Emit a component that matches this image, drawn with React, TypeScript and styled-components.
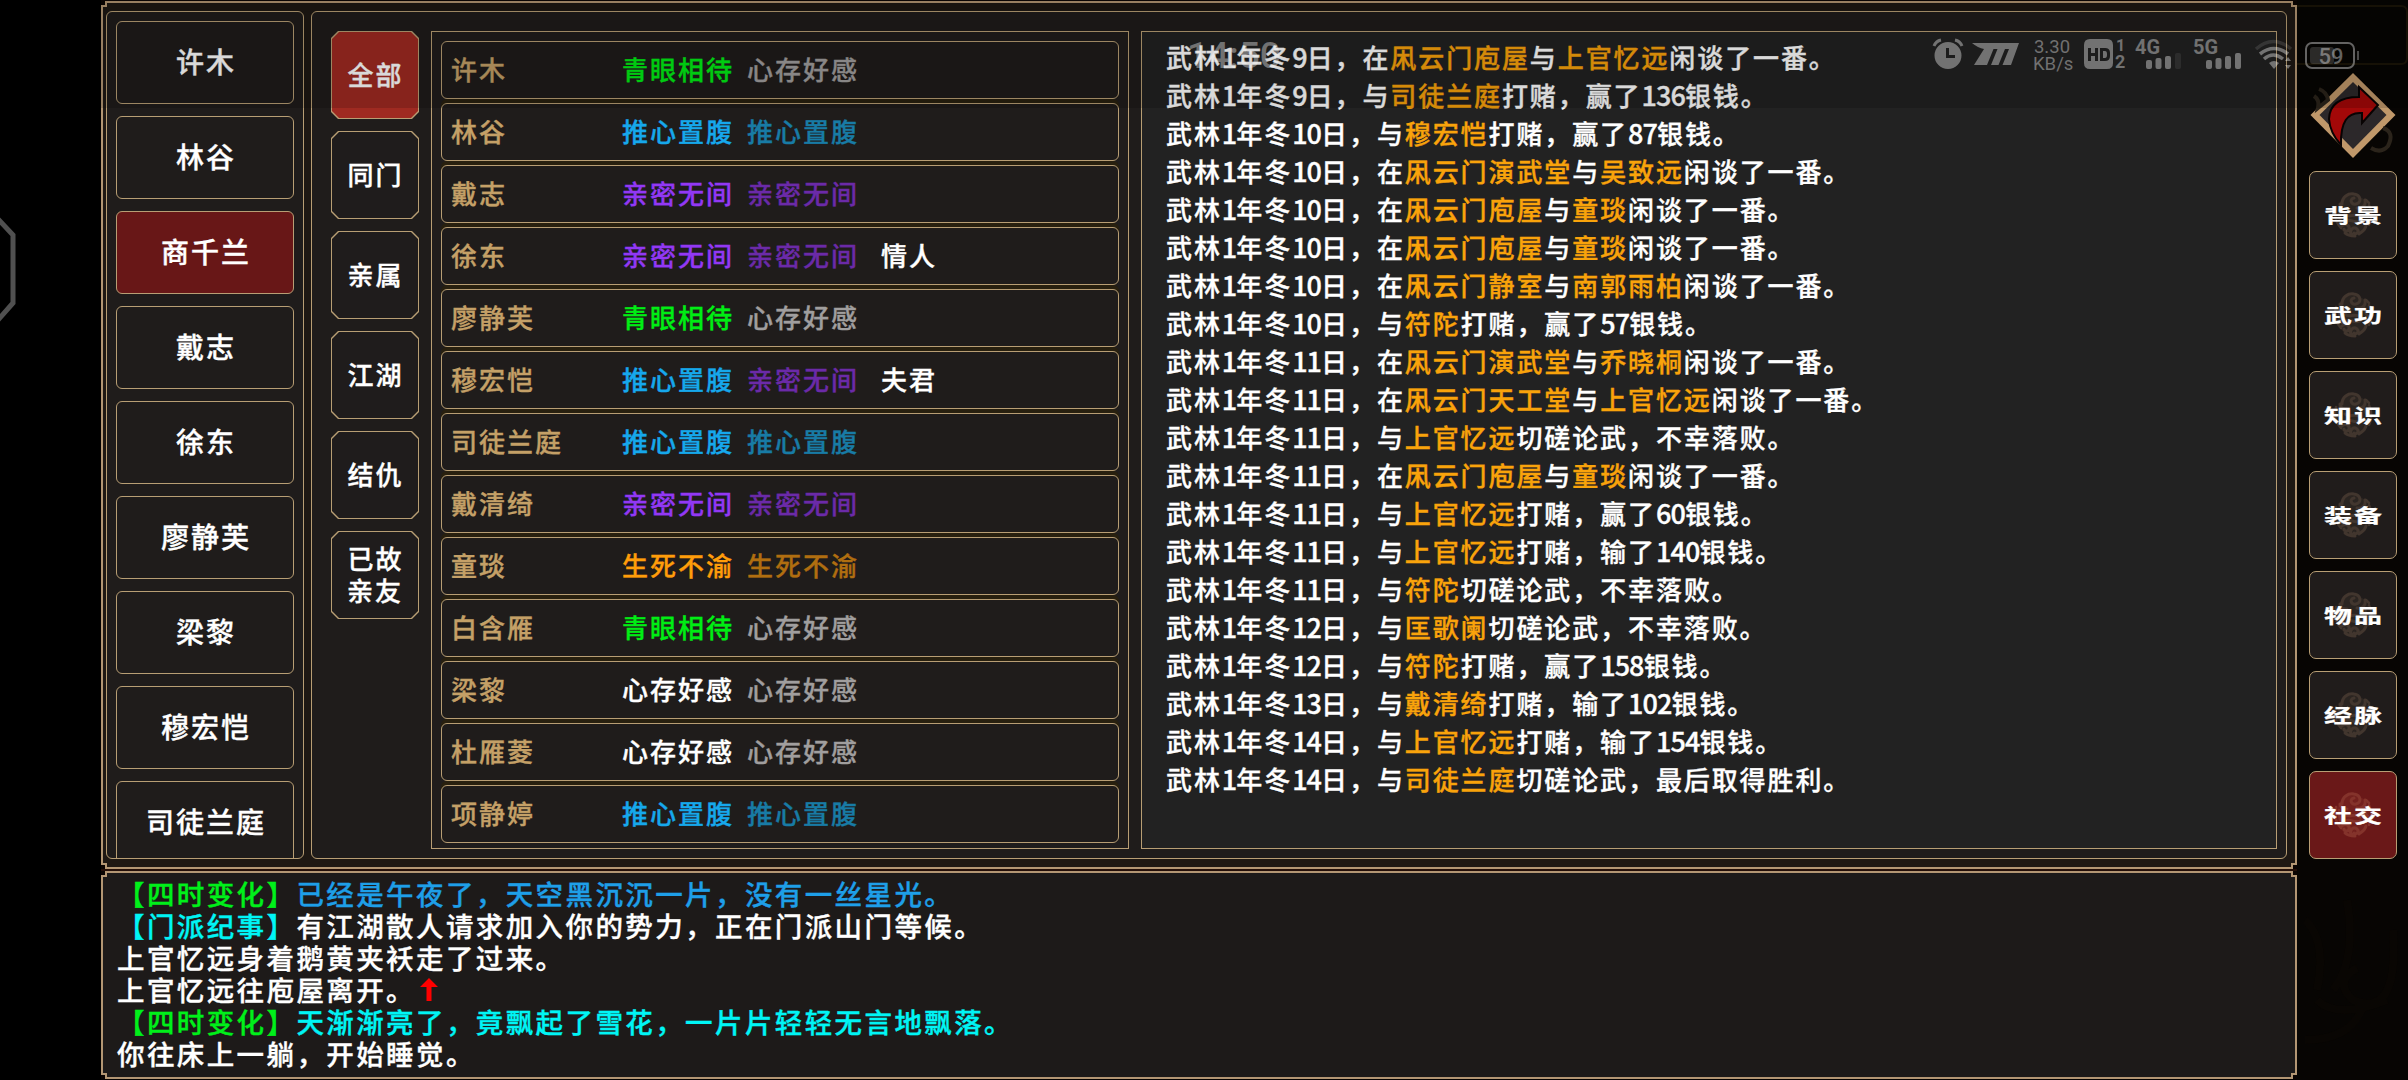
import { Fragment } from "react";
import styled, { createGlobalStyle } from "styled-components";

const GlobalStyle = createGlobalStyle`
  * {
    box-sizing: border-box;
  }

  body {
    margin: 0;
    background: #000;
    overflow: hidden;
  }

  button {
    font-family: inherit;
    padding: 0;
    cursor: pointer;
  }
`;

const GOLD = "#b89e74";

const Screen = styled.div`
  position: relative;
  display: flex;
  width: 2408px;
  height: 1080px;
  padding-left: 101px;
  overflow: hidden;
  background: linear-gradient(90deg, #000 101px, #070503 101px);
  color: #fff;
  font-family: "Noto Sans CJK SC", sans-serif;
  font-weight: 500;
  -webkit-text-stroke: 0.35px currentColor;
`;

const Main = styled.main`
  display: flex;
  flex-direction: column;
  gap: 2px;
  width: 2196px;
  height: 1080px;
  padding: 1px 0;
  background: linear-gradient(#0d0605 865px, #240f08 868px, #240f08 873px, #060302 876px);
`;

const Frame = styled.section<{ $height: number; $color: string }>`
  position: relative;
  display: flex;
  gap: 7px;
  height: ${(p) => p.$height}px;
  flex: none;
  border: 2px solid #b39673;
  background: ${(p) => p.$color};
`;

const Corner = styled.i<{ $v: "top" | "bottom"; $h: "left" | "right" }>`
  position: absolute;
  ${(p) => p.$v}: -2px;
  ${(p) => p.$h}: -2px;
  width: 6px;
  height: 6px;
  background: #0b0503;
  border: 0 solid #b39673;
  border-${(p) => (p.$v === "top" ? "bottom" : "top")}-width: 2px;
  border-${(p) => (p.$h === "left" ? "right" : "left")}-width: 2px;
`;

const Panel = styled.div`
  display: flex;
  height: 848px;
  margin-top: 8px;
  border: 1px solid ${GOLD};
  border-radius: 6px;
  background: #1f1c1b;
  overflow: hidden;
`;

const CharacterPanel = styled(Panel)`
  flex-direction: column;
  gap: 12px;
  width: 198px;
  margin-left: 3px;
  padding: 9px;
`;

const CharacterButton = styled.button<{ $active?: boolean }>`
  flex: none;
  width: 178px;
  height: 83px;
  padding-bottom: 4px;
  border: 1px solid ${GOLD};
  border-radius: 6px;
  background: ${(p) => (p.$active ? "#681717" : "#1f1c1b")};
  color: #fff;
  font-size: 28px;
  font-weight: 500;
  letter-spacing: 2px;
  text-indent: 2px;
`;

const SocialPanel = styled(Panel)`
  width: 1976px;
  padding: 19px 9px 9px 19px;
`;

const Tabs = styled.div`
  display: flex;
  flex-direction: column;
  gap: 12px;
  width: 100px;
`;

const TAB_SHAPE = `polygon(
  7px 0, calc(100% - 7px) 0, calc(100% - 5px) 2px, calc(100% - 2px) 5px, 100% 7px,
  100% calc(100% - 7px), calc(100% - 2px) calc(100% - 5px), calc(100% - 5px) calc(100% - 2px), calc(100% - 7px) 100%,
  7px 100%, 5px calc(100% - 2px), 2px calc(100% - 5px), 0 calc(100% - 7px),
  0 7px, 2px 5px, 5px 2px
)`;

const TabButton = styled.button<{ $active?: boolean }>`
  width: 88px;
  height: 88px;
  padding: 1px;
  border: 0;
  background: ${GOLD};
  clip-path: ${TAB_SHAPE};

  span {
    display: flex;
    align-items: center;
    justify-content: center;
    width: 86px;
    height: 86px;
    padding: 0 14px 3px;
    background: ${(p) => (p.$active ? "#9f2a21" : "#1f1c1c")};
    clip-path: ${TAB_SHAPE};
    color: #fff;
    font-size: 26px;
    font-weight: 500;
    line-height: 32px;
    letter-spacing: 2px;
    text-indent: 1px;
  }
`;

const RelationList = styled.div`
  display: flex;
  flex-direction: column;
  width: 698px;
  height: 818px;
  padding: 9px 9px 0;
  border: 1px solid ${GOLD};
  background: #201d1c;
`;

const RelationRow = styled.div`
  display: grid;
  grid-template-columns: 171px 125px 134px 1fr;
  align-items: center;
  flex: none;
  height: 58px;
  padding: 0 0 4px 9px;
  border: 1px solid ${GOLD};
  border-radius: 6px;
  background: #1f1c1b;
  font-size: 26px;
  letter-spacing: 2px;
  white-space: nowrap;

  & + & {
    margin-top: 4px;
    box-shadow: 0 -4px 0 #28200f;
  }
`;

const Label = styled.span<{ $color: string }>`
  color: ${(p) => p.$color};
`;

const LogPanel = styled.div`
  width: 1136px;
  height: 818px;
  margin-left: 12px;
  padding: 6px 24px;
  border: 1px solid ${GOLD};
  background: #222;
  font-size: 26px;
  line-height: 38px;
  letter-spacing: 1.9px;
  white-space: nowrap;
`;

const LogLine = styled.p`
  height: 38px;
  margin: 0;
`;

const Digits = styled.span`
  font-family: "Liberation Sans Narrow", "Noto Sans CJK SC", sans-serif;
  font-size: 27px;
  letter-spacing: -0.9px;
`;

const Mark = styled.span`
  color: #f9a30b;
`;

const Messages = styled.div`
  padding: 4px 14px;
  font-size: 27.5px;
  line-height: 32px;
  letter-spacing: 2.4px;
  white-space: nowrap;

  p {
    height: 32px;
    margin: 0;
  }
`;

const Arrow = styled.svg`
  margin: 0 0 -1px 4px;
`;

const SideMenu = styled.nav`
  position: relative;
  display: flex;
  flex-direction: column;
  gap: 12px;
  width: 111px;
  padding: 73px 0 0 12px;
`;

const ReturnButton = styled.button`
  height: 86px;
  width: 88px;
  border: 0;
  background: none;
`;

const MenuButton = styled.button<{ $active?: boolean }>`
  display: grid;
  place-items: center;
  width: 88px;
  height: 88px;
  flex: none;
  border: 1px solid ${GOLD};
  border-radius: 7px;
  background: ${(p) => (p.$active ? "#6a1818" : "#201c1b")};
  color: ${(p) => (p.$active ? "#84332b" : "#42362e")};

  svg,
  span {
    grid-area: 1 / 1;
  }

  span {
    color: #fff;
    font-family: LiSu, "Noto Sans CJK SC", sans-serif;
    font-size: 28px;
    font-weight: 700;
    line-height: 30px;
    letter-spacing: 2px;
    text-indent: 2px;
    transform: scaleY(0.68);
  }
`;

const Backdrop = styled.svg`
  position: absolute;
  inset: 0;
`;

const StatusShade = styled.div`
  position: absolute;
  top: 0;
  left: 101px;
  display: flex;
  align-items: flex-start;
  width: 2307px;
  height: 108px;
  padding-top: 39px;
  background: rgba(0, 0, 0, 0.15);
  color: rgba(255, 255, 255, 0.38);
  font-family: Roboto, sans-serif;
  pointer-events: none;
  -webkit-text-stroke: 0;

  svg {
    flex: none;
    overflow: visible;
  }
`;

const Clock = styled.span`
  width: 94px;
  margin: 0 651px 0 1086px;
  font-size: 37px;
  font-weight: 500;
  line-height: 34px;
`;

const Speed = styled.span`
  width: 38px;
  margin: 0 13px 0 11px;
  font-size: 18.5px;
  font-weight: 400;
  line-height: 17px;
  text-align: center;
`;

const EdgeHandle = styled.svg`
  position: absolute;
  top: 216px;
  left: 0;
`;

const characters = ["许木", "林谷", "商千兰", "戴志", "徐东", "廖静芙", "梁黎", "穆宏恺", "司徒兰庭"];
const tabs = ["全部", "同门", "亲属", "江湖", "结仇", "已故亲友"];
const menu = ["背景", "武功", "知识", "装备", "物品", "经脉", "社交"];

const levels: Record<string, [string, string]> = {
  青眼相待: ["#00ee14", "#0a8a14"],
  心存好感: ["#ffffff", "#a09e9e"],
  推心置腹: ["#16a8ec", "#187ba5"],
  亲密无间: ["#9238f5", "#6b2aa8"],
  生死不渝: ["#ff9d0a", "#b06e10"],
};

const relations = [
  ["许木", "青眼相待", "心存好感"],
  ["林谷", "推心置腹", "推心置腹"],
  ["戴志", "亲密无间", "亲密无间"],
  ["徐东", "亲密无间", "亲密无间", "情人"],
  ["廖静芙", "青眼相待", "心存好感"],
  ["穆宏恺", "推心置腹", "亲密无间", "夫君"],
  ["司徒兰庭", "推心置腹", "推心置腹"],
  ["戴清绮", "亲密无间", "亲密无间"],
  ["童琰", "生死不渝", "生死不渝"],
  ["白含雁", "青眼相待", "心存好感"],
  ["梁黎", "心存好感", "心存好感"],
  ["杜雁菱", "心存好感", "心存好感"],
  ["项静婷", "推心置腹", "推心置腹"],
];

// names and places between * are highlighted
const log = [
  "武林1年冬9日，在*凩云门庖屋*与*上官忆远*闲谈了一番。",
  "武林1年冬9日，与*司徒兰庭*打赌，赢了136银钱。",
  "武林1年冬10日，与*穆宏恺*打赌，赢了87银钱。",
  "武林1年冬10日，在*凩云门演武堂*与*吴致远*闲谈了一番。",
  "武林1年冬10日，在*凩云门庖屋*与*童琰*闲谈了一番。",
  "武林1年冬10日，在*凩云门庖屋*与*童琰*闲谈了一番。",
  "武林1年冬10日，在*凩云门静室*与*南郭雨柏*闲谈了一番。",
  "武林1年冬10日，与*符陀*打赌，赢了57银钱。",
  "武林1年冬11日，在*凩云门演武堂*与*乔晓桐*闲谈了一番。",
  "武林1年冬11日，在*凩云门天工堂*与*上官忆远*闲谈了一番。",
  "武林1年冬11日，与*上官忆远*切磋论武，不幸落败。",
  "武林1年冬11日，在*凩云门庖屋*与*童琰*闲谈了一番。",
  "武林1年冬11日，与*上官忆远*打赌，赢了60银钱。",
  "武林1年冬11日，与*上官忆远*打赌，输了140银钱。",
  "武林1年冬11日，与*符陀*切磋论武，不幸落败。",
  "武林1年冬12日，与*匡歌阑*切磋论武，不幸落败。",
  "武林1年冬12日，与*符陀*打赌，赢了158银钱。",
  "武林1年冬13日，与*戴清绮*打赌，输了102银钱。",
  "武林1年冬14日，与*上官忆远*打赌，输了154银钱。",
  "武林1年冬14日，与*司徒兰庭*切磋论武，最后取得胜利。",
];

function LogText({ text }: { text: string }) {
  return (
    <LogLine>
      {text.split("*").map((part, i) =>
        i % 2 ? (
          <Mark key={i}>{part}</Mark>
        ) : (
          <Fragment key={i}>
            {part.split(/(\d+)/).map((s, j) => (j % 2 ? <Digits key={j}>{s}</Digits> : s))}
          </Fragment>
        )
      )}
    </LogLine>
  );
}

function Corners() {
  return (
    <>
      <Corner $v="top" $h="left" />
      <Corner $v="top" $h="right" />
      <Corner $v="bottom" $h="left" />
      <Corner $v="bottom" $h="right" />
    </>
  );
}

function CloudSeal() {
  return (
    <svg width="40" height="46" viewBox="0 0 40 46" fill="none" stroke="currentColor" strokeLinecap="round">
      <ellipse cx="20" cy="23" rx="17" ry="20" fill="currentColor" stroke="none" opacity="0.35" />
      <path strokeWidth="3" d="M9 12c0-7 6-11 12-10 7 1 8 9 2 10-5 1-7-5-2-6M14 17c-4 0-7-2-7-5M24 16c6 1 9-3 8-8" />
      <path strokeWidth="2.5" d="M3 15c-2 8 0 16 5 21M6 18c1 6-1 9 3 13M36 13c3 6 3 14 0 20M31 15c3 4 0 7 4 9M33 8l3 3" />
      <path strokeWidth="3" d="M9 34c3-3 8-1 7 3-1 3-5 2-5 0M19 43c-4-4 1-9 5-6 3 3-1 6-3 4M26 42c2-2 6-3 7-8M12 41c3 3 7 3 10 3" />
      <path strokeWidth="3" d="M12 22c4 5 10-2 15 3M13 29c4-3 8 3 14 0" />
    </svg>
  );
}

function Bars({ dim }: { dim?: boolean }) {
  return (
    <g fill="currentColor">
      <rect x="12" y="21" width="6" height="9" rx="2" />
      <rect x="21.5" y="19" width="6" height="11" rx="2" />
      <rect x="31" y="17" width="6" height="13" rx="2" />
      <rect x="41" y="14" width="6" height="16" rx="2" opacity={dim ? 0.2 : 1} />
    </g>
  );
}

function StatusBar() {
  return (
    <StatusShade>
      <Clock>14:50</Clock>
      <svg width="32" height="32" viewBox="0 0 32 32">
        <path
          fill="currentColor"
          fillRule="evenodd"
          d="M16 3a13.5 13.5 0 1 0 0 27a13.5 13.5 0 1 0 0-27zM14 9h3v7h6v3h-9z"
        />
        <path d="M2 7q2-5 7-6M30 7q-2-5-7-6" fill="none" stroke="currentColor" strokeWidth="3" />
      </svg>
      <svg width="58" height="32" viewBox="0 0 58 32">
        <path
          fill="currentColor"
          d="M8 4H55L47 26H38.500L45 10H41L34.500 26H27L33.500 10H29.500L23 26H10L20 10Q14 9 8 4z"
        />
      </svg>
      <Speed>
        3.30
        <br />
        KB/s
      </Speed>
      <svg width="50" height="32" viewBox="0 0 50 32" fill="currentColor">
        <path
          fillRule="evenodd"
          d="M6 0h17q6 0 6 6v18q0 6-6 6H6q-6 0-6-6V6q0-6 6-6zM4 9v13h3v-5h4v5h3V9h-3v5H7V9zM16 9v13h5q5 0 5-5v-3q0-5-5-5zM19 12h2q2 0 2 3v1q0 3-2 3h-2z"
        />
        <text x="32" y="12" fontSize="16" fontWeight="700">1</text>
        <text x="31" y="29" fontSize="18" fontWeight="700">2</text>
      </svg>
      <svg width="60" height="32" viewBox="0 0 60 32">
        <text x="1" y="15" fontSize="20" fontWeight="700" fill="currentColor">4G</text>
        <Bars dim />
      </svg>
      <svg width="60" height="32" viewBox="0 0 60 32">
        <text x="-1" y="15" fontSize="20" fontWeight="700" fill="currentColor">5G</text>
        <Bars />
      </svg>
      <svg width="50" height="32" viewBox="0 0 50 32" fill="none" stroke="currentColor" strokeWidth="3.5">
        <path d="M2 10q17-15 35 0" opacity=".3" />
        <path d="M6 15q14-11 28 0M10 20q9-8 19 0" />
        <path d="M15 24q5-4 10 0l-5 6z" fill="currentColor" stroke="none" />
        <path d="M31 22l3-4 3 4zM31 26l3 4 3-4z" fill="currentColor" stroke="none" />
      </svg>
      <svg width="58" height="32" viewBox="0 0 58 32">
        <rect x="2" y="4" width="48" height="25" rx="6" fill="none" stroke="currentColor" strokeWidth="2" />
        <rect x="6" y="8" width="24" height="17" rx="3" fill="currentColor" opacity=".4" />
        <path d="M54 12v9" stroke="currentColor" strokeWidth="1.5" />
        <text x="14.5" y="25" fontSize="22" fontWeight="500" fill="currentColor">59</text>
      </svg>
    </StatusShade>
  );
}

export default function App() {
  return (
    <Screen>
      <GlobalStyle />
      <Main>
        <Frame $height={868} $color="#1e1813">
          <Corners />
          <CharacterPanel>
            {characters.map((name) => (
              <CharacterButton key={name} $active={name === "商千兰"}>
                {name}
              </CharacterButton>
            ))}
          </CharacterPanel>
          <SocialPanel>
            <Tabs>
              {tabs.map((tab) => (
                <TabButton key={tab} $active={tab === "全部"}>
                  <span>{tab}</span>
                </TabButton>
              ))}
            </Tabs>
            <RelationList>
              {relations.map(([name, theirs, mine, bond]) => (
                <RelationRow key={name}>
                  <Label $color="#c4a067">{name}</Label>
                  <Label $color={levels[theirs][0]}>{theirs}</Label>
                  <Label $color={levels[mine][1]}>{mine}</Label>
                  <Label $color="#fff">{bond}</Label>
                </RelationRow>
              ))}
            </RelationList>
            <LogPanel>
              {log.map((text, i) => (
                <LogText key={i} text={text} />
              ))}
            </LogPanel>
          </SocialPanel>
        </Frame>
        <Frame $height={208} $color="#1d1a19">
          <Corners />
          <Messages>
            <p>
              <Label $color="#00f01a">【四时变化】</Label>
              <Label $color="#1e9fe8">已经是午夜了，天空黑沉沉一片，没有一丝星光。</Label>
            </p>
            <p>
              <Label $color="#00f5f5">【门派纪事】</Label>
              有江湖散人请求加入你的势力，正在门派山门等候。
            </p>
            <p>上官忆远身着鹅黄夹袄走了过来。</p>
            <p>
              上官忆远往庖屋离开。
              <Arrow width="18" height="24" viewBox="0 0 18 24">
                <path d="M9 0l9 9h-6.500v14h-5V9H0z" fill="#f00" />
              </Arrow>
            </p>
            <p>
              <Label $color="#00f01a">【四时变化】</Label>
              <Label $color="#00f5f5">天渐渐亮了，竟飘起了雪花，一片片轻轻无言地飘落。</Label>
            </p>
            <p>你往床上一躺，开始睡觉。</p>
          </Messages>
        </Frame>
      </Main>
      <SideMenu>
        <Backdrop width="111" height="1080" viewBox="0 0 111 1080" fill="none">
          <path d="M0 6h104q6 0 6 6v46q0 6-6 6H0" stroke="#1a1408" strokeWidth="2" />
          <path d="M22 89q8 3 9 11l-10 8q2-8-4-12M86 128q12 4 5 18-7 8-17 2" stroke="#2b241b" strokeWidth="4" />
          <path
            d="M8 920q22 20 12 70M50 900q10 60-14 90M96 930q6 90-40 70-20-18 4-32M20 1000q20 20 70 0M8 1040q50 0 60-40"
            stroke="#090603"
            strokeWidth="8"
          />
        </Backdrop>
        <ReturnButton aria-label="返回">
          <svg width="88" height="86" viewBox="0 0 88 86">
            <path d="M44 0L86.5 42 44 85 1.500 42z" fill="#c0986a" />
            <path d="M44 9L77.500 42 44 76 10.500 42z" fill="#2c282a" />
            <path
              d="M50 14L69 32 53 50V40Q31 38 32 72Q21 60 20 46Q21 24 50 24z"
              fill="#a30808"
              stroke="#080303"
              strokeWidth="2"
            />
          </svg>
        </ReturnButton>
        {menu.map((item) => (
          <MenuButton key={item} $active={item === "社交"}>
            <CloudSeal />
            <span>{item}</span>
          </MenuButton>
        ))}
      </SideMenu>
      <StatusBar />
      <EdgeHandle width="18" height="108" viewBox="0 0 18 108" fill="none">
        <path d="M-2 3L13 19V87L-2 104" stroke="#505050" strokeWidth="5" />
      </EdgeHandle>
    </Screen>
  );
}
